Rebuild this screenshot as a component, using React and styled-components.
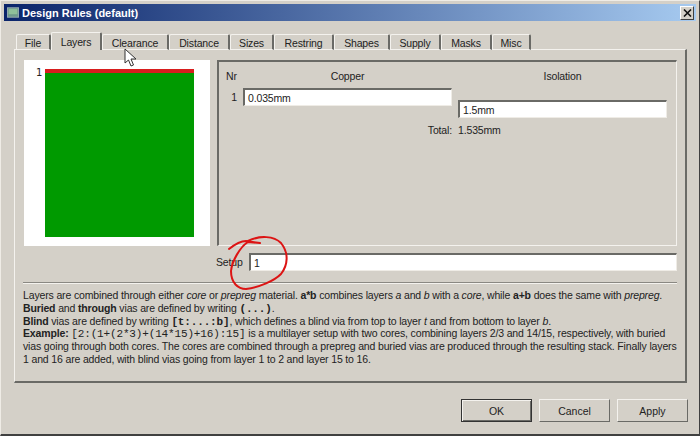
import styled, { createGlobalStyle } from "styled-components";

const tabs = [
  { label: "File", width: 35 },
  { label: "Layers", width: 51, active: true },
  { label: "Clearance", width: 67 },
  { label: "Distance", width: 61 },
  { label: "Sizes", width: 44 },
  { label: "Restring", width: 60 },
  { label: "Shapes", width: 56 },
  { label: "Supply", width: 51 },
  { label: "Masks", width: 51 },
  { label: "Misc", width: 39 },
];

const App = () => {
  return (
    <Window>
      <GlobalStyle />
      <TitleBar>
        <AppIcon viewBox="0 0 14 12">
          <rect x="0.5" y="0.5" width="13" height="11" fill="#6f9a8c" stroke="#9fb0b5" />
          <rect x="2" y="2" width="10" height="6" fill="#8fc09a" />
        </AppIcon>
        <TitleText>Design Rules (default)</TitleText>
        <CloseButton>
          <svg width="9" height="8" viewBox="0 0 9 8">
            <path d="M1 0.5 L8 7.5 M8 0.5 L1 7.5" stroke="#111" strokeWidth="1.6" fill="none" />
          </svg>
        </CloseButton>
      </TitleBar>

      <Body>
        <TabBar>
          {tabs.map((tab) => (
            <Tab key={tab.label} $active={tab.active} $width={tab.width}>
              {tab.label}
            </Tab>
          ))}
        </TabBar>

        <TabPane>
          <TopRow>
            <Preview>
              <LayerNumber>1</LayerNumber>
              <Stack>
                <CopperLayer />
                <CoreLayer />
              </Stack>
            </Preview>

            <LayerGroup>
              <LayerGrid>
                <HeadLabel $align="left">Nr</HeadLabel>
                <HeadLabel>Copper</HeadLabel>
                <HeadLabel>Isolation</HeadLabel>
                <RowNumber>1</RowNumber>
                <Field>0.035mm</Field>
                <Field $offset={12}>1.5mm</Field>
                <TotalLabel>Total:</TotalLabel>
                <TotalValue>1.535mm</TotalValue>
              </LayerGrid>
            </LayerGroup>
          </TopRow>

          <SetupRow>
            <SetupLabel>Setup</SetupLabel>
            <SetupField>1</SetupField>
          </SetupRow>

          <Separator />

          <HelpText>
            Layers are combined through either <i>core</i> or <i>prepreg</i> material.{" "}
            <b>a*b</b> combines layers <i>a</i> and <i>b</i> with a <i>core</i>, while{" "}
            <b>a+b</b> does the same with <i>prepreg</i>.
            <br />
            <b>Buried</b> and <b>through</b> vias are defined by writing <BoldCode>(...)</BoldCode>.
            <br />
            <b>Blind</b> vias are defined by writing <BoldCode>[t:...:b]</BoldCode>, which defines a
            blind via from top to layer <i>t</i> and from bottom to layer <i>b</i>.
            <br />
            <b>Example:</b> <Code>[2:(1+(2*3)+(14*15)+16):15]</Code> is a multilayer setup with two
            cores, combining layers 2/3 and 14/15, respectively, with buried
            <br />
            vias going through both cores. The cores are combined through a prepreg and buried vias
            are produced through the resulting stack. Finally layers
            <br />1 and 16 are added, with blind vias going from layer 1 to 2 and layer 15 to 16.
          </HelpText>
        </TabPane>

        <ButtonRow>
          <DialogButton $default>OK</DialogButton>
          <DialogButton>Cancel</DialogButton>
          <DialogButton>Apply</DialogButton>
        </ButtonRow>
      </Body>

      <Cursor width="14" height="20" viewBox="0 0 14 20">
        <path
          d="M1 1 L1 15 L4.5 12 L7 18 L9.5 17 L7 11 L12 11 Z"
          fill="#fff"
          stroke="#333"
          strokeWidth="1"
        />
      </Cursor>

      <Scribble width="70" height="60" viewBox="0 0 70 60">
        <path
          d="M7 16 C12 12 18 8 24 8 L38 10 L26 9 C18 14 10 28 9 38 C9 50 16 56 24 56 C38 54 52 48 59 41 C66 32 67 20 59 10 C52 3 38 2 26 8"
          fill="none"
          stroke="#dc1414"
          strokeWidth="2"
          strokeLinecap="round"
          strokeLinejoin="round"
        />
      </Scribble>
    </Window>
  );
};

export default App;

const GlobalStyle = createGlobalStyle`
  html, body {
    margin: 0;
    padding: 0;
    background: #d4d0c8;
  }
  * {
    box-sizing: border-box;
  }
`;

const Window = styled.div`
  position: relative;
  width: 700px;
  height: 436px;
  overflow: hidden;
  padding: 3px 3px 2px 3px;
  display: flex;
  flex-direction: column;
  background: #d4d0c8;
  border-top: 1px solid #efece6;
  border-left: 1px solid #efece6;
  border-right: 1px solid #404040;
  border-bottom: 2px solid #404040;
  font-family: "Liberation Sans", sans-serif;
  font-size: 10.5px;
  letter-spacing: -0.15px;
  color: #222;
`;

const TitleBar = styled.div`
  height: 17px;
  flex: none;
  display: flex;
  align-items: center;
  padding: 0 2px 0 3px;
  background: linear-gradient(90deg, #0a246a 0%, #a6caf0 100%);
`;

const AppIcon = styled.svg`
  width: 12px;
  height: 11px;
  margin-right: 3px;
`;

const TitleText = styled.span`
  flex: 1;
  color: #fff;
  font-size: 11px;
  font-weight: 700;
  letter-spacing: 0;
`;

const CloseButton = styled.div`
  width: 14px;
  height: 14px;
  display: flex;
  align-items: center;
  justify-content: center;
  background: #d4d0c8;
  border: 1px solid;
  border-color: #fff #404040 #404040 #fff;
`;

const Body = styled.div`
  flex: 1;
  display: flex;
  flex-direction: column;
  padding: 11px 8px 0 10px;
`;

const TabBar = styled.div`
  height: 18px;
  flex: none;
  display: flex;
  align-items: flex-end;
  padding-left: 2px;
  position: relative;
  z-index: 1;
  margin-bottom: -1px;
`;

const Tab = styled.div`
  width: ${({ $width }) => $width}px;
  height: ${({ $active }) => ($active ? 18 : 16)}px;
  display: flex;
  align-items: center;
  justify-content: center;
  padding-top: ${({ $active }) => ($active ? 0 : 1)}px;
  background: #d4d0c8;
  border-top: 1px solid #f4f2ee;
  border-left: 1px solid #f4f2ee;
  border-right: 2px solid #6a6a66;
  border-bottom: ${({ $active }) => ($active ? "none" : "1px solid #f4f2ee")};
  border-radius: 2px 2px 0 0;
`;

const TabPane = styled.div`
  width: 673px;
  height: 334px;
  flex: none;
  padding: 10px 8px 0 9px;
  display: flex;
  flex-direction: column;
  border-top: 1px solid #f4f2ee;
  border-left: 1px solid #f4f2ee;
  border-right: 2px solid #6a6a66;
  border-bottom: 2px solid #6a6a66;
`;

const TopRow = styled.div`
  display: flex;
  gap: 7px;
  height: 186px;
  flex: none;
`;

const Preview = styled.div`
  width: 186px;
  flex: none;
  background: #fff;
  display: flex;
  justify-content: flex-start;
  padding: 9px 0 9px 12px;
`;

const LayerNumber = styled.span`
  width: 9px;
  font-family: "DejaVu Sans", sans-serif;
  font-size: 10px;
  line-height: 8px;
`;

const Stack = styled.div`
  width: 149px;
  display: flex;
  flex-direction: column;
`;

const CopperLayer = styled.div`
  height: 4px;
  background: #d81e1e;
`;

const CoreLayer = styled.div`
  flex: 1;
  background: #009a00;
`;

const LayerGroup = styled.div`
  flex: 1;
  padding: 8px 0 0 7px;
  border-top: 2px solid #6a6a66;
  border-left: 2px solid #6a6a66;
  border-right: 1px solid #f4f2ee;
  border-bottom: 1px solid #f4f2ee;
`;

const LayerGrid = styled.div`
  display: grid;
  grid-template-columns: 11px 209px 209px;
  column-gap: 6px;
  align-items: start;
`;

const HeadLabel = styled.span`
  text-align: ${({ $align }) => $align || "center"};
  line-height: 12px;
  margin-bottom: 6px;
`;

const RowNumber = styled.span`
  text-align: right;
  line-height: 19px;
`;

const Field = styled.div`
  height: 18px;
  line-height: 16px;
  padding-left: 3px;
  margin-top: ${({ $offset }) => $offset || 0}px;
  background: #fff;
  border-top: 2px solid #6a6a66;
  border-left: 2px solid #6a6a66;
  border-right: 1px solid #efece6;
  border-bottom: 1px solid #efece6;
`;

const TotalLabel = styled.span`
  grid-column: 1 / 3;
  text-align: right;
  margin-top: 6px;
  line-height: 12px;
`;

const TotalValue = styled.span`
  margin-top: 6px;
  line-height: 12px;
`;

const SetupRow = styled.div`
  display: flex;
  align-items: center;
  margin-top: 7px;
  padding-left: 192px;
`;

const SetupLabel = styled.span`
  width: 33px;
`;

const SetupField = styled(Field)`
  flex: none;
  width: 428px;
`;

const Separator = styled.div`
  height: 2px;
  margin: 11px 0 0 -1px;
  border-top: 1px solid #8a8882;
  border-bottom: 1px solid #f4f2ee;
`;

const HelpText = styled.div`
  margin: 5px 0 0 -1px;
  line-height: 12.8px;
  white-space: nowrap;
`;

const Code = styled.span`
  font-family: "Liberation Mono", monospace;
  font-size: 11px;
  line-height: 0;
  letter-spacing: -0.15px;
`;

const BoldCode = styled(Code)`
  font-weight: 700;
`;

const ButtonRow = styled.div`
  display: flex;
  justify-content: flex-end;
  gap: 7px;
  padding: 16px 0 0 0;
`;

const DialogButton = styled.button`
  width: 71px;
  height: 23px;
  padding: 0;
  background: #d4d0c8;
  font-family: "Liberation Sans", sans-serif;
  font-size: 10.5px;
  color: #222;
  border: 1px solid;
  border-color: ${({ $default }) =>
    $default ? "#333" : "#f4f2ee #6a6a66 #6a6a66 #f4f2ee"};
  box-shadow: ${({ $default }) =>
    $default ? "inset 1px 1px #f4f2ee, inset -1px -1px #6a6a66" : "none"};
`;

const Cursor = styled.svg`
  position: absolute;
  left: 123px;
  top: 47px;
  z-index: 3;
`;

const Scribble = styled.svg`
  position: absolute;
  left: 221px;
  top: 232px;
  z-index: 3;
`;
